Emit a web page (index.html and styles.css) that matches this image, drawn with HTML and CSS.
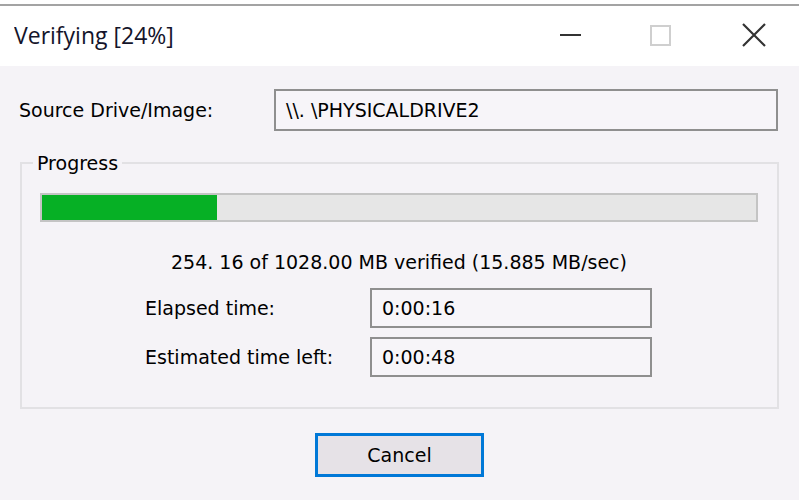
FILE: index.html
```html
<!DOCTYPE html>
<html>
<head>
<meta charset="utf-8">
<link rel="stylesheet" href="styles.css">
</head>
<body>
<div class="window">
  <div class="topline"></div>
  <div class="titlebar">
    <div class="title">Verifying [24%]</div>
    <div class="controls">
      <span class="ctl min"><svg width="22" height="22" viewBox="0 0 22 22"><line x1="0" y1="11" x2="21" y2="11" stroke="#333" stroke-width="2"/></svg></span>
      <span class="ctl max"><svg width="22" height="22" viewBox="0 0 22 22"><rect x="1" y="1" width="19" height="19" fill="none" stroke="#cfcfcf" stroke-width="2"/></svg></span>
      <span class="ctl close"><svg width="24" height="24" viewBox="0 0 24 24"><path d="M1 1 L23 23 M23 1 L1 23" stroke="#333" stroke-width="2.2" fill="none"/></svg></span>
    </div>
  </div>
  <div class="content">
    <div class="source-row">
      <div class="label">Source Drive/Image:</div>
      <div class="field wide">\\. \PHYSICALDRIVE2</div>
    </div>
    <fieldset class="group">
      <legend>Progress</legend>
      <div class="bar"><div class="fill" style="width:24.5%"></div></div>
      <div class="stats">254. 16 of 1028.00 MB verified (15.885 MB/sec)</div>
      <div class="times">
        <div class="label">Elapsed time:</div>
        <div class="field">0:00:16</div>
        <div class="label">Estimated time left:</div>
        <div class="field">0:00:48</div>
      </div>
    </fieldset>
    <div class="buttons">
      <button class="btn">Cancel</button>
    </div>
  </div>
</div>
</body>
</html>
```

FILE: styles.css
```css
html, body {
  margin: 0;
  padding: 0;
  background: #ffffff;
}
body {
  width: 799px;
  height: 500px;
  overflow: hidden;
  font-family: "DejaVu Sans", Verdana, sans-serif;
  font-size: 19px;
  color: #000;
}
.window {
  display: flex;
  flex-direction: column;
  height: 500px;
}
.topline {
  margin-top: 4px;
  height: 2px;
  background: #a3a3a3;
}
.titlebar {
  height: 60px;
  display: flex;
  align-items: center;
  justify-content: space-between;
  background: #fff;
}
.title {
  padding-left: 14px;
  font-family: "Open Sans", "Noto Sans", sans-serif;
  font-size: 23px;
  color: #14142a;
  transform: scaleY(1.05);
  margin-top: -2px;
}
.controls {
  display: flex;
  align-items: center;
  padding-right: 33px;
  margin-top: -3px;
}
.ctl {
  display: flex;
}
.min { margin-right: 68px; margin-left: 2px; margin-top: 0; }
.max { margin-right: 70px; margin-top: 2px; }
.content {
  flex: 1;
  background: #f5f3f7;
  padding: 23px 20px 0 19px;
  display: flex;
  flex-direction: column;
}
.source-row {
  display: flex;
  align-items: center;
}
.source-row .label {
  width: 255px;
}
.field {
  box-sizing: border-box;
  border: 2px solid #8f8f8f;
  background: #f7f5f9;
  padding-left: 10px;
  display: flex;
  align-items: center;
}
.field.wide {
  width: 504px;
  height: 42px;
}
.group {
  margin: 22px 0 0 1px;
  padding: 20px 19px 0 18px;
  border: 2px solid #e2e1e4;
  height: 256px;
  box-sizing: border-box;
  min-width: 0;
}
.group legend {
  padding: 0 4px;
  margin-left: -7px;
  line-height: 20px;
}
.bar {
  height: 29px;
  box-sizing: border-box;
  border: 2px solid #c4c4c4;
  background: #e6e6e6;
  margin-top: 0;
}
.fill {
  height: 100%;
  background: #06b025;
}
.stats {
  text-align: center;
  margin-top: 25px;
  line-height: 30px;
}
.times {
  display: grid;
  grid-template-columns: 225px 282px;
  row-gap: 9px;
  margin: 11px 0 0 105px;
  align-items: center;
}
.times .field {
  height: 40px;
}
.buttons {
  display: flex;
  justify-content: center;
  margin-top: 24px;
  padding-left: 1px;
}
.btn {
  width: 169px;
  height: 44px;
  box-sizing: border-box;
  border: 3px solid #0078d7;
  background: #e6e2e7;
  font-family: inherit;
  font-size: 19px;
  color: #000;
  padding: 0;
}
```
